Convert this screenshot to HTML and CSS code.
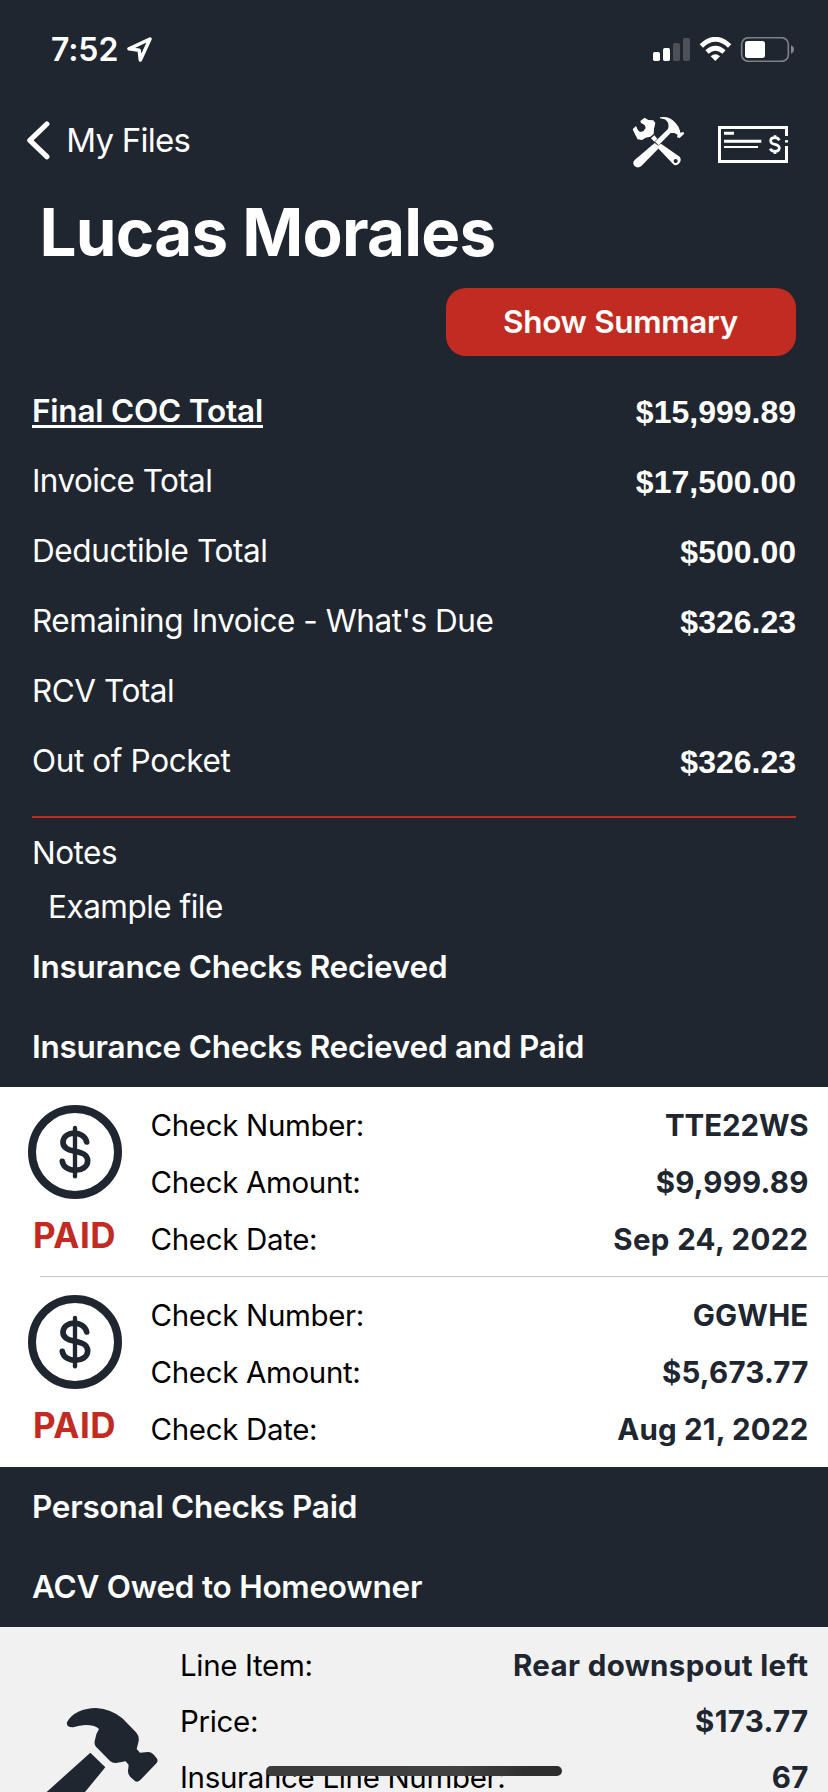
FILE: index.html
```html
<!DOCTYPE html>
<html lang="en">
<head>
<meta charset="utf-8">
<title>Lucas Morales</title>
<link rel="stylesheet" href="styles.css">
</head>
<body>
<svg class="defs" aria-hidden="true">
  <symbol id="coin" viewBox="84 75 282 282">
    <g fill="none" stroke="currentColor" stroke-linecap="round">
      <circle cx="225" cy="216" r="129" stroke-width="24"/>
      <path d="M260 186C253 150 190 151 189 187C189 205 206 211 225 214C250 218 263 225 263 243C262 280 192 280 187 244" stroke-width="17"/>
      <path d="M225 144V289" stroke-width="13"/>
    </g>
  </symbol>
</svg>
<div class="screen">
  <header class="status">
    <span class="time">7:52</span>
    <svg class="location" viewBox="380 112 75 75"><path d="M449 118L386 147.500L416.500 151.500L420 181Z" fill="none" stroke="#fff" stroke-width="10.500" stroke-linejoin="round"/></svg>
    <svg class="indicators" viewBox="159 51 426 75">
      <g fill="#fff">
        <rect x="159" y="96" width="21" height="27" rx="5"/><rect x="189" y="84" width="21" height="39" rx="5"/>
        <g fill-opacity=".2"><rect x="219" y="69" width="21" height="54" rx="5"/><rect x="249" y="54" width="21" height="69" rx="5"/></g>
        <path d="M346 123L332 109Q346 97 360 109Z"/>
        <rect x="435" y="63" width="60" height="51" rx="8"/>
        <path fill-opacity=".45" d="M573 76Q582 80 582 88.500T573 101Z"/>
      </g>
      <path d="M304 78Q346 38 389 78M321 96Q346 74 372 96" fill="none" stroke="#fff" stroke-width="14.500"/>
      <rect x="425" y="53" width="140" height="71" rx="20" fill="none" stroke="#fff" stroke-opacity=".42" stroke-width="5"/>
    </svg>
  </header>

  <nav class="nav">
    <svg class="back" viewBox="80 362 68 116"><path d="M139.500 371L88.500 420L139.500 469" fill="none" stroke="#fff" stroke-width="15.500" stroke-linecap="round" stroke-linejoin="round"/></svg>
    <span class="back-label">My Files</span>
    <svg class="tools" viewBox="20 18 160 156">
      <g fill="#fff">
        <path d="M45 33L58 23L69 30L84 31L90 39L86 57L85 72L75 80L61 83L50 90L37 88L30 75L22 58L32 48L38 61L44 66L54 64L61 54L58 45L47 39Z"/>
        <path d="M77 85L87 76L96 86L87 95Z"/>
        <path d="M104 22Q128 17 145 33Q163 50 165 68L175 66L176 72L163 84L155 82L157 74L147 69L136 69L100 106L89 95L128 57Q134 37 118 28L104 25Z"/>
        <path d="M88 99L104 111L48 168Q37 177 27 167Q20 158 28 150Z"/>
        <path fill-rule="evenodd" d="M94 110L107 101L163 140Q170 149 162 160Q152 170 144 163ZM151 147a6 6 0 1 0 .1 0Z"/>
      </g>
    </svg>
    <svg class="check-icon" viewBox="354 318 210 111">
      <g fill="none" stroke="#fff" stroke-width="9">
        <path d="M559.500 348V322.500H358.500V424.500H559.500V378"/>
        <path d="M372 340H402M372 364H484"/><path d="M372 381H474" stroke-width="6"/>
        <path d="M538 361Q534 353 525 353Q512 353 512 362Q512 371 525 373Q538 376 538 385Q537 394 525 394Q513 394 511 386M525 346V353M525 394V402" stroke-width="8"/>
        <path d="M555 364H564" stroke-width="7"/>
      </g>
    </svg>
  </nav>

  <h1 class="title">Lucas Morales</h1>
  <div class="actions"><button class="summary-btn" type="button">Show Summary</button></div>

  <dl class="totals">
    <div class="total"><dt class="total-main">Final COC Total</dt><dd>$15,999.89</dd></div>
    <div class="total"><dt class="tight">Invoice Total</dt><dd>$17,500.00</dd></div>
    <div class="total"><dt class="loose">Deductible Total</dt><dd>$500.00</dd></div>
    <div class="total"><dt>Remaining Invoice - What's Due</dt><dd>$326.23</dd></div>
    <div class="total"><dt>RCV Total</dt><dd></dd></div>
    <div class="total"><dt class="loose">Out of Pocket</dt><dd>$326.23</dd></div>
  </dl>

  <section class="notes">
    <p class="notes-label">Notes</p>
    <p class="notes-text">Example file</p>
  </section>

  <h2 class="section">Insurance Checks Recieved</h2>
  <h2 class="section">Insurance Checks Recieved and Paid</h2>
  <div class="checks">
    <article class="check">
      <div class="badge"><svg class="coin"><use href="#coin"/></svg><span class="paid">PAID</span></div>
      <dl class="fields">
        <div class="field"><dt>Check Number:</dt><dd class="plain">TTE22WS</dd></div>
        <div class="field"><dt>Check Amount:</dt><dd>$9,999.89</dd></div>
        <div class="field"><dt>Check Date:</dt><dd class="wide">Sep 24, 2022</dd></div>
      </dl>
    </article>
    <article class="check">
      <div class="badge"><svg class="coin"><use href="#coin"/></svg><span class="paid">PAID</span></div>
      <dl class="fields">
        <div class="field"><dt>Check Number:</dt><dd>GGWHE</dd></div>
        <div class="field"><dt>Check Amount:</dt><dd>$5,673.77</dd></div>
        <div class="field"><dt>Check Date:</dt><dd>Aug 21, 2022</dd></div>
      </dl>
    </article>
  </div>
  <h2 class="section">Personal Checks Paid</h2>
  <h2 class="section">ACV Owed to Homeowner</h2>
  <article class="item">
    <svg class="hammer" viewBox="0 0 390 291">
      <g fill="#202630">
        <path d="M81 82Q90 62 115 50Q140 39 168 39Q214 42 247 70L288 112Q298 123 296 138L290 162L300 173L323 171Q332 170 340 178L349 188Q356 196 350 204L300 256Q292 264 284 257L271 246Q263 237 264 227L266 210L257 199L228 204Q218 205 210 198L168 155Q161 147 165 134Q168 115 177 102Q166 90 137 90Q118 91 100 97Q78 98 81 82Z"/>
        <path d="M151 173L196 217L135 291H20Z"/>
      </g>
    </svg>
    <dl class="fields item-fields">
      <div class="field"><dt>Line Item:</dt><dd class="wide">Rear downspout left</dd></div>
      <div class="field"><dt>Price:</dt><dd class="wide">$173.77</dd></div>
      <div class="field"><dt>Insurance Line Number:</dt><dd>67</dd></div>
    </dl>
  </article>
  <div class="home-indicator"></div>
</div>
</body>
</html>
```
FILE: styles.css
```css
* { box-sizing: border-box; margin: 0; padding: 0; }
body { background: #202630; font-family: Inter, "Liberation Sans", sans-serif; font-size: 31.5px; color: #fff; }
svg { display: block; flex: none; }
.defs { display: none; }
.screen { position: relative; width: 828px; height: 1792px; overflow: hidden; background: #202630; }

.status { display: flex; height: 120px; padding: 30px 33px 0 51px; }
.time { font-size: 32px; font-weight: 600; line-height: 40px; letter-spacing: -.1px; }
.location { width: 25px; height: 25px; margin: 7px 0 0 9px; }
.indicators { width: 142px; height: 25px; margin: 7px 0 0 auto; }

.nav { display: flex; height: 72px; padding: 0 40px 0 27px; }
.back { width: 22.700px; height: 38.700px; margin-top: 1px; }
.back-label { margin-left: 16.500px; font-size: 33px; line-height: 40px; letter-spacing: -.75px; }
.tools { width: 53.300px; height: 52px; margin: -4px 0 0 auto; }
.check-icon { width: 70px; height: 37px; margin: 6px 0 0 33px; }

.title { height: 96px; padding-left: 39.500px; font-size: 65.500px; font-weight: 700; line-height: 82px; letter-spacing: -.75px; }
.actions { display: flex; justify-content: flex-end; padding-right: 32px; }
.summary-btn { width: 350px; height: 68px; border: 0; border-radius: 20px; background: #c22b21; color: #fff; font: 600 31.500px/68px Inter, sans-serif; letter-spacing: -.34px; padding-right: 1px; }

.totals { margin: 20px 32px 0; padding-bottom: 20px; border-bottom: 2px solid #c22b21; }
.total { display: flex; justify-content: space-between; height: 70px; line-height: 70px; }
.total dt { letter-spacing: -.46px; }
.total .tight { letter-spacing: -.6px; }
.total .loose { letter-spacing: -.38px; }
.total .total-main { font-weight: 600; letter-spacing: -.2px; text-decoration: underline; text-decoration-thickness: 3px; text-underline-offset: 3px; text-decoration-skip-ink: none; }
.total dd { font: 700 32px/72px "Liberation Sans", Arial, sans-serif; }

.notes { padding: 15px 32px 0; line-height: 40px; letter-spacing: -.5px; }
.notes-text { margin-top: 14px; padding-left: 16px; }
.section { height: 80px; padding-left: 32px; font-size: 31.500px; font-weight: 600; line-height: 80px; letter-spacing: -.24px; }

.checks { background: #fff; }
.check { display: flex; height: 190px; padding: 10px 20px 0 28px; }
.check:first-child { background: linear-gradient(#c6c6c8, #c6c6c8) 40px 189px / 828px 1px no-repeat; }
.badge { width: 122.500px; padding-top: 8px; color: #202630; }
.coin { width: 94px; height: 94px; }
.paid { display: block; margin-top: 15px; padding-left: 5px; color: #c22b21; font-size: 35px; font-weight: 700; line-height: 42px; letter-spacing: .5px; }

.fields { flex: 1; font-size: 29.500px; line-height: 57px; }
.field { display: flex; justify-content: space-between; }
.field dt { color: #000; letter-spacing: -.34px; }
.field dd { color: #202630; font-weight: 700; letter-spacing: .2px; margin-right: -.500px; }
.field .plain { letter-spacing: -.1px; }
.field .wide { letter-spacing: .34px; }

.item { display: flex; height: 200px; padding: 10px 20px 0 40px; background: #f1f1f1; }
.hammer { width: 130px; height: 97px; margin-top: 58px; }
.item-fields { padding-left: 10px; line-height: 56px; }
.home-indicator { position: absolute; left: 266px; top: 1766px; width: 296px; height: 10px; border-radius: 5px; background: linear-gradient(90deg, #3c3c3c, #424242 65%, #2e2e2e 90%); }
```
